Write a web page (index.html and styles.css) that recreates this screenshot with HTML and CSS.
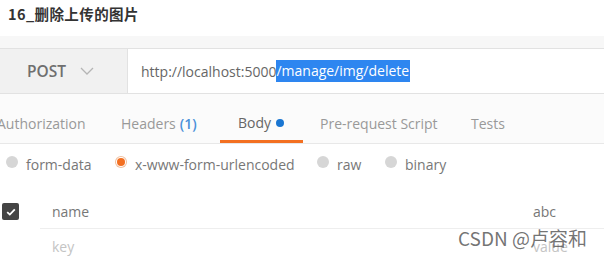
FILE: index.html
```html
<!DOCTYPE html>
<html>
<head>
<meta charset="utf-8">
<link rel="stylesheet" href="styles.css">
</head>
<body>
<div class="title">16_删除上传的图片</div>
<div class="reqbar">
  <div class="reqrow">
    <div class="method">POST
      <svg class="chev" width="14" height="8" viewBox="0 0 14 8"><path d="M1 1 L7 7 L13 1" fill="none" stroke="#b5b5b5" stroke-width="1.3"/></svg>
    </div>
    <div class="url">http://localhost:5000<span class="sel">/manage/img/delete</span></div>
  </div>
</div>
<div class="tabs">
  <div class="tab t-auth">Authorization</div>
  <div class="tab t-head">Headers <span class="count">(1)</span></div>
  <div class="tab t-body active">Body <span class="dot"></span></div>
  <div class="tab t-pre">Pre-request Script</div>
  <div class="tab t-tests">Tests</div>
</div>
<div class="radios">
  <div class="radio r1"><span class="circ"></span>form-data</div>
  <div class="radio r2"><span class="circ on"></span>x-www-form-urlencoded</div>
  <div class="radio r3"><span class="circ"></span>raw</div>
  <div class="radio r4"><span class="circ"></span>binary</div>
</div>
<div class="kvrow first">
  <div class="cb"><svg width="10" height="8" viewBox="0 0 10 8"><path d="M1.2 4.2 L3.8 6.6 L8.8 1.4" fill="none" stroke="#fff" stroke-width="1.8"/></svg></div>
  <div class="key">name</div>
  <div class="val">abc</div>
</div>
<div class="kvrow second">
  <div class="cbspace"></div>
  <div class="key ph">key</div>
  <div class="val ph">value</div>
</div>
<div class="wm">CSDN @卢容和</div>
</body>
</html>
```
FILE: styles.css
```css
html, body { margin: 0; padding: 0; background: #fff; }
body {
  width: 604px; height: 257px; overflow: hidden; position: relative;
  font-family: "Open Sans", "Noto Sans CJK SC", sans-serif;
  color: #555;
}
.title {
  height: 36px; box-sizing: border-box; padding: 4px 0 0 8px;
  font-family: "Noto Sans CJK SC", sans-serif; font-weight: bold; font-size: 14.5px;
  color: #333; line-height: 20px; letter-spacing: 0.4px;
}
.reqbar { background: #f7f7f7; padding-top: 12px; }
.reqrow {
  display: flex; height: 44px;
  border-top: 1px solid #e2e2e2; border-bottom: 1px solid #e2e2e2;
}
.method {
  width: 127px; box-sizing: border-box; padding-left: 27px;
  background: #f1f1f1; display: flex; align-items: center;
  font-size: 15.5px; font-weight: 600; color: #6f6f6f;
}
.chev { margin-left: 14px; }
.url {
  flex: 1; background: #fff; border-left: 1px solid #e2e2e2;
  display: flex; align-items: center; padding-left: 13px;
  font-size: 14px; color: #666;
}
.sel { background: #2e86f0; color: #fff; line-height: 22px; padding-right: 1px; }
.tabs {
  display: flex; height: 49px; border-bottom: 1px solid #e8e8e8;
  background: #fbfbfb;
}
.tab {
  font-size: 14px; color: #999; box-sizing: border-box; height: 49px;
  padding-top: 10px;
  display: flex; align-items: center; white-space: nowrap;
}
.t-auth { margin-left: -3px; width: 124px; }
.t-head { width: 99px; }
.count { color: #4a90d9; margin-left: 4px; font-weight: 600; }
.t-body { width: 83px; padding-left: 18px; color: #666; border-bottom: 3px solid #f37021; padding-top: 11px; }
.dot { width: 8px; height: 8px; border-radius: 50%; background: #1976d2; display: inline-block; margin-left: 5px; }
.t-pre { width: 168px; padding-left: 17px; }
.radios {
  display: flex; height: 41px; align-items: center; background: #fff;
  font-size: 14px; color: #777;
}
.radio { display: flex; align-items: center; white-space: nowrap; }
.circ {
  width: 12px; height: 12px; border-radius: 50%; background: #d6d6d6;
  display: inline-block; margin-right: 8px; position: relative; top: -3px;
}
.circ.on { background: #fff; box-shadow: inset 0 0 0 1px #f0c0a0; }
.circ.on::after {
  content: ""; position: absolute; left: 2px; top: 2px; width: 8px; height: 8px;
  border-radius: 50%; background: #f36f21;
}
.r1 { margin-left: 6px; width: 109px; }
.r2 { width: 202px; }
.r3 { width: 68px; }
.kvrow { display: flex; align-items: center; height: 35px; font-size: 14px; }
.kvrow.first { margin-top: 9px; position: relative; }
.cb {
  width: 17px; height: 17px; border-radius: 2px; background: #444;
  margin-left: 2px; display: flex; align-items: center; justify-content: center;
}
.cbspace { width: 17px; margin-left: 2px; }
.key { margin-left: 33px; width: 481px; color: #777; }
.val { color: #777; }
.ph { color: #c4c4c4; }
.kvrow.first::after {
  content: ""; position: absolute; left: 40px; right: 0; bottom: 0;
  border-bottom: 1px solid #eeeeee;
}
.wm {
  position: absolute; left: 458px; top: 227px;
  font-family: "Noto Sans CJK SC", sans-serif; font-size: 19px;
  color: rgba(70,70,70,0.75); line-height: 22px;
}
```
